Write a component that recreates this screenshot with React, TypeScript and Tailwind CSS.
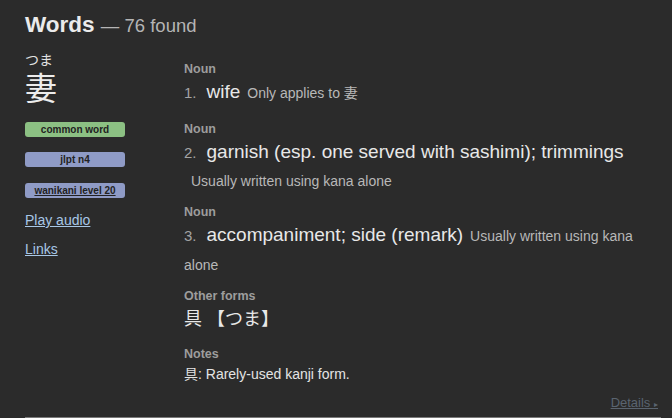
import React from "react";

function Sense({
  n,
  meaning,
  note,
  className,
}: {
  n: number;
  meaning: string;
  note: string;
  className?: string;
}) {
  return (
    <div className={className}>
      <div className="text-[12.5px] leading-[16px] font-bold text-[#9d9d9d]">Noun</div>
      <div className="mt-[1px] text-[19px] leading-[27px] text-[#e8e8e8]">
        <span className="text-[15px] text-[#a3a3a3] mr-[10px]">{n}.</span>
        <span>{meaning}</span>
        <wbr />
        <span className="ml-[7px] text-[14px] text-[#b8b8b8]">{note}</span>
      </div>
    </div>
  );
}

export default function App() {
  return (
    <div className="w-[672px] h-[418px] overflow-hidden bg-[#2b2b2b] font-['Liberation_Sans','Noto_Sans_CJK_JP',sans-serif]">
      <div className="ml-[25px] w-[636px] h-[418px] border-b border-[#7a7a7a] flex flex-col pt-[11px] pb-[4px]">
        <h2 className="h-[28px] leading-[28px] text-[22.5px] font-bold text-[#ebebeb] whitespace-nowrap">
          Words <span className="text-[18.5px] font-normal text-[#b5b5b5]">— 76 found</span>
        </h2>
        <div className="mt-[11px] flex items-start">
          <div className="w-[159px] shrink-0">
            <div className="mt-[2px] text-[14px] leading-[16px] text-[#e2e2e2]">つま</div>
            <div className="mt-[3px] text-[32px] leading-[36px] text-[#ececec]">妻</div>
            <div className="mt-[15px] w-[100px] h-[15px] rounded-[3px] bg-[#8cc083] text-center text-[10px] leading-[15px] font-bold text-[#222]">
              common word
            </div>
            <div className="mt-[15px] w-[100px] h-[15px] rounded-[3px] bg-[#8f9bc6] text-center text-[10px] leading-[15px] font-bold text-[#222]">
              jlpt n4
            </div>
            <div className="mt-[16px] w-[100px] h-[15px] rounded-[3px] bg-[#8f9bc6] text-center text-[10px] leading-[15px] font-bold text-[#222] underline">
              wanikani level 20
            </div>
            <div className="mt-[12px] text-[14px] leading-[20px] text-[#a8c7e6] underline">Play audio</div>
            <div className="mt-[9px] text-[14px] leading-[20px] text-[#a8c7e6] underline">Links</div>
          </div>
          <div className="w-[477px] pt-[11px]">
            <Sense n={1} meaning="wife" note="Only applies to 妻" className="mb-[14px]" />
            <Sense
              n={2}
              meaning="garnish (esp. one served with sashimi); trimmings"
              note="Usually written using kana alone"
              className="mb-[9px]"
            />
            <Sense
              n={3}
              meaning="accompaniment; side (remark)"
              note="Usually written using kana alone"
              className="mb-[9px]"
            />
            <div className="text-[12.5px] leading-[16px] font-bold text-[#9d9d9d]">Other forms</div>
            <div className="mt-[3px] text-[18px] leading-[24px] text-[#e8e8e8]">具 【つま】</div>
            <div className="mt-[15px] text-[12.5px] leading-[16px] font-bold text-[#9d9d9d]">Notes</div>
            <div className="mt-[2px] text-[14px] leading-[20px] text-[#e4e4e4]">具: Rarely-used kanji form.</div>
          </div>
        </div>
        <div className="mt-auto flex justify-end pr-[3px]">
          <span className="text-[13px] leading-[16px] text-[#5a6470] underline">
            Details <span className="font-['DejaVu_Sans'] text-[8px]">▸</span>
          </span>
        </div>
      </div>
    </div>
  );
}
